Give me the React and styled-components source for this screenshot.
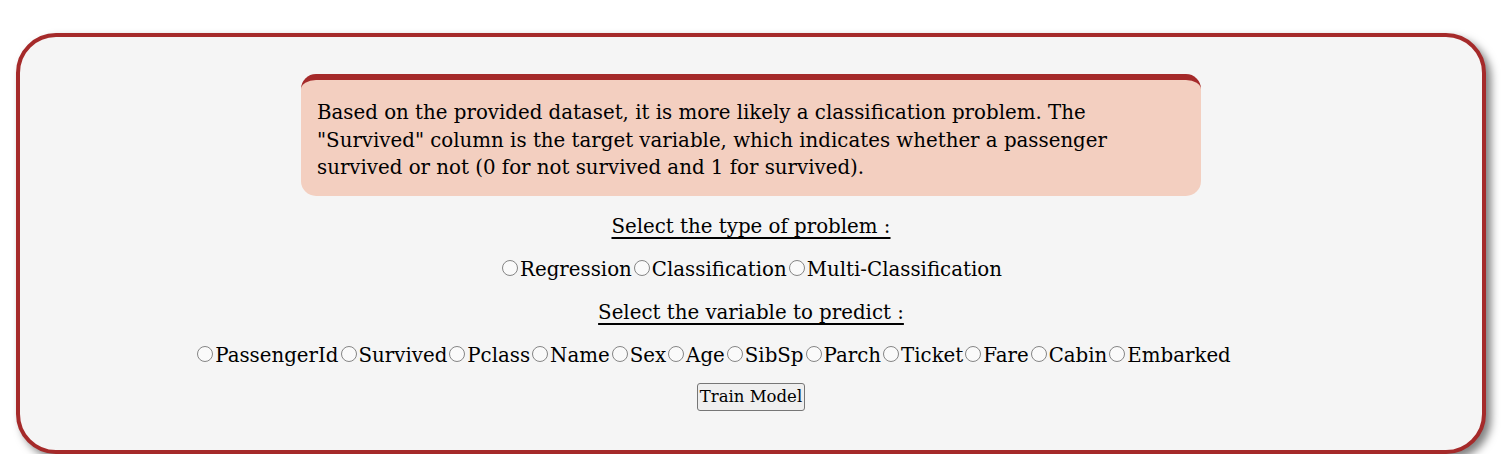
import React, { useState } from 'react'
import styled, { createGlobalStyle } from 'styled-components'

const GlobalStyle = createGlobalStyle`
  body {
    margin: 0;
    background: #ffffff;
    font-family: "DejaVu Serif", "Liberation Serif", serif;
  }
`

const problemTypes = ['Regression', 'Classification', 'Multi-Classification']
const columns = ['PassengerId', 'Survived', 'Pclass', 'Name', 'Sex', 'Age', 'SibSp', 'Parch', 'Ticket', 'Fare', 'Cabin', 'Embarked']

function App() {
  const [problem, setProblem] = useState('')
  const [target, setTarget] = useState('')

  return (
    <>
      <GlobalStyle />
      <Card>
        <Message>
          Based on the provided dataset, it is more likely a classification problem. The "Survived" column is the
          target variable, which indicates whether a passenger survived or not (0 for not survived and 1 for survived).
        </Message>
        <Title>Select the type of problem :</Title>
        <Options>
          {problemTypes.map((p) => (
            <Option key={p}>
              <Radio type="radio" name="problem" checked={problem === p} onChange={() => setProblem(p)} />
              {p}
            </Option>
          ))}
        </Options>
        <Title>Select the variable to predict :</Title>
        <Options $shift={76}>
          {columns.map((c) => (
            <Option key={c}>
              <Radio type="radio" name="target" checked={target === c} onChange={() => setTarget(c)} />
              {c}
            </Option>
          ))}
        </Options>
        <TrainButton>Train Model</TrainButton>
      </Card>
    </>
  )
}

export default App

const Card = styled.div`
  margin: 33px 23px 0 16px;
  padding: 37px 0 39px;
  background: #f5f5f5;
  border: 4px solid #a52a2a;
  border-radius: 40px;
  box-shadow: 5px 5px 8px rgba(0, 0, 0, 0.5);
  display: flex;
  flex-direction: column;
  align-items: center;
  gap: 15px;
  font-size: 19.8px;
  color: #000;
`

const Message = styled.div`
  box-sizing: border-box;
  width: 900px;
  padding: 19px 16px 14px;
  background: #f3cfc0;
  border-top: 6px solid #a52a2a;
  border-radius: 15px;
  line-height: 27.5px;
  margin-bottom: 2px;
`

const Title = styled.div`
  line-height: 28px;
  text-decoration: underline;
  text-decoration-thickness: 2px;
  text-decoration-skip-ink: none;
  text-underline-offset: 4px;
`

const Options = styled.div`
  display: flex;
  justify-content: center;
  line-height: 28px;
  padding-right: ${(p) => p.$shift || 0}px;
`

const Option = styled.label`
  display: flex;
  align-items: center;
  white-space: nowrap;
`

const Radio = styled.input`
  appearance: none;
  flex-shrink: 0;
  box-sizing: border-box;
  width: 16px;
  height: 16px;
  margin: 0 2px 4px 2px;
  border: 1.5px solid #858585;
  border-radius: 50%;
  background: #fafafa;

  &:checked {
    background: radial-gradient(circle, #1a73e8 0 4px, #fafafa 4.5px);
    border-color: #1a73e8;
  }
`

const TrainButton = styled.button`
  margin-top: -2px;
  font-family: "DejaVu Serif", "Liberation Serif", serif;
  font-size: 16.5px;
  padding: 0 2px;
  height: 28px;
  color: #000;
  background: #efefef;
  border: 1px solid #767676;
  border-radius: 3px;
`
